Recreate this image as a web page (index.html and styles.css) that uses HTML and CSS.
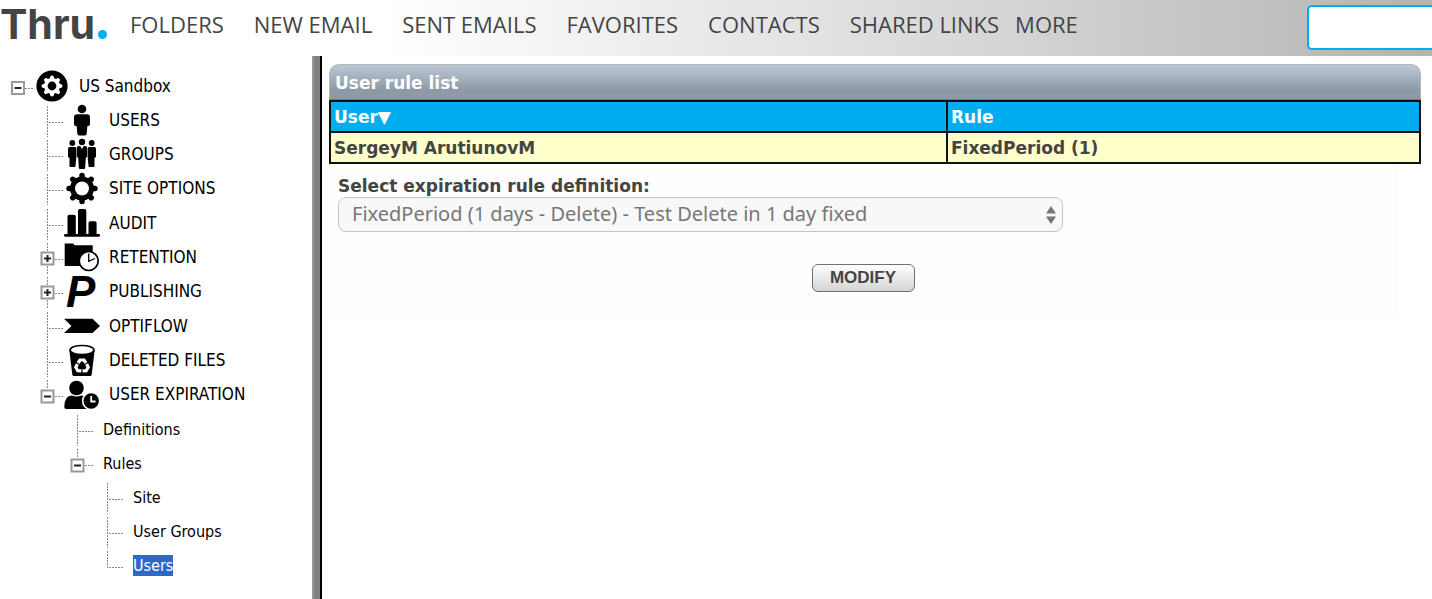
FILE: index.html
```html
<!DOCTYPE html>
<html lang="en">
<head>
    <meta charset="UTF-8">
    <meta name="viewport" content="width=device-width, initial-scale=1.0">
    <title>Thru - User rule list</title>
    <link rel="stylesheet" href="styles.css">
</head>
<body>
    <!-- tree line shapes, reused by every row -->
    <svg class="defs" width="0" height="0" aria-hidden="true">
        <symbol id="line-mid" viewBox="0 0 27 34">
            <path d="M10.500 3V34M12 19.500H27" class="dots"/>
        </symbol>
        <symbol id="line-end" viewBox="0 0 27 34">
            <path d="M10.500 3V20M12 19.500H27" class="dots"/>
        </symbol>
        <symbol id="minus" viewBox="0 0 27 34">
            <path d="M18 19.500H27" class="dots"/>
            <rect x="5" y="13" width="12" height="12" class="box"/>
            <path d="M7.500 19H14.500" class="sign"/>
        </symbol>
        <symbol id="minus-mid" viewBox="0 0 27 34">
            <path d="M10.500 3V12M18 19.500H27" class="dots"/>
            <rect x="4.500" y="13.500" width="12" height="12" class="box"/>
            <path d="M7 19.500H14" class="sign"/>
        </symbol>
        <symbol id="plus" viewBox="0 0 27 34">
            <path d="M10.500 3V12M10.500 26V34M18 19.500H27" class="dots"/>
            <rect x="4.500" y="12.500" width="12" height="12" class="box"/>
            <path d="M7 18.500H14M10.500 15V22" class="sign"/>
        </symbol>
    </svg>

    <header class="header">
        <a class="logo" href="#">Thru<span class="logo-dot"></span></a>
        <nav class="nav">
            <a href="#">FOLDERS</a>
            <a href="#">NEW EMAIL</a>
            <a href="#">SENT EMAILS</a>
            <a href="#">FAVORITES</a>
            <a href="#">CONTACTS</a>
            <a href="#">SHARED LINKS</a>
            <a href="#" class="more">MORE</a>
        </nav>
        <input type="text" class="search" aria-label="Search">
    </header>

    <div class="page">
        <aside class="sidebar">
            <ul class="tree">
                <li>
                    <div class="row">
                        <button class="toggle" aria-label="Collapse"><svg class="line"><use href="#minus"/></svg></button>
                        <svg class="icon" viewBox="0 0 36 34">
                            <circle cx="18" cy="17" r="15.600"/>
                            <g stroke="#fff" stroke-width="4" stroke-linecap="round">
                                <path d="M18 8.500V25.500M9.500 17H26.500M12 11L24 23M24 11L12 23"/>
                            </g>
                            <circle cx="18" cy="17" r="8" fill="#fff"/>
                            <circle cx="18" cy="17" r="4.400"/>
                        </svg>
                        <a class="label" href="#">US Sandbox</a>
                    </div>
                    <ul>
                        <li>
                            <div class="row">
                                <svg class="line"><use href="#line-mid"/></svg>
                                <svg class="icon" viewBox="0 0 36 34">
                                    <circle cx="18" cy="6" r="4.300"/>
                                    <path d="M13 11.300h10q3 0 3 3v7q0 2-2.700 2l-.6 7.500q-.2 1.700-1.700 1.700h-6q-1.500 0-1.700-1.700l-.6-7.500q-2.700 0-2.700-2v-7q0-3 3-3z"/>
                                </svg>
                                <a class="label" href="#">USERS</a>
                            </div>
                        </li>
                        <li>
                            <div class="row">
                                <svg class="line"><use href="#line-mid"/></svg>
                                <svg class="icon" viewBox="0 0 36 34">
                                    <circle cx="8.300" cy="6" r="2.900"/>
                                    <circle cx="27.700" cy="6" r="2.900"/>
                                    <circle cx="18" cy="5" r="3.200"/>
                                    <path d="M5.500 10h5.500q1 0 1.200 1v11l-.7 7q0 1-1 1h-4q-1 0-1-1v-8l-1.500-1v-8q0-2 1.500-2zM30.500 10H25q-1 0-1.200 1v11l.7 7q0 1 1 1h4q1 0 1-1v-8l1.500-1v-8q0-2-1.500-2z"/>
                                    <path d="M15 9h1.300l1.700 3 1.700-3H21q2.300 0 2.300 2.300V20l-1.500.8-.6 10q-.1 1.200-1.200 1.200h-4q-1.100 0-1.200-1.200l-.6-10-1.500-.8v-8.700Q12.700 9 15 9z"/>
                                </svg>
                                <a class="label" href="#">GROUPS</a>
                            </div>
                        </li>
                        <li>
                            <div class="row">
                                <svg class="line"><use href="#line-mid"/></svg>
                                <svg class="icon" viewBox="0 0 36 34">
                                    <g stroke="#000" stroke-width="5.500" stroke-linecap="round">
                                        <path d="M18 4.500V30.500M5 17.500H31M8.800 8.300L27.200 26.700M27.200 8.300L8.800 26.700"/>
                                    </g>
                                    <circle cx="18" cy="17.500" r="12"/>
                                    <circle cx="18" cy="17.500" r="7" fill="#fff"/>
                                </svg>
                                <a class="label" href="#">SITE OPTIONS</a>
                            </div>
                        </li>
                        <li>
                            <div class="row">
                                <svg class="line"><use href="#line-mid"/></svg>
                                <svg class="icon" viewBox="0 0 36 34">
                                    <path d="M3.500 28V10.500q0-1.800 1.800-1.800H10q1.800 0 1.800 1.800V28zM14 28V4.800Q14 3 15.800 3h4.700q1.800 0 1.800 1.800V28zM24.500 28V17q0-1.800 1.800-1.800h4.500q1.800 0 1.800 1.800v11z"/>
                                    <rect x="0" y="28" width="36" height="2.800" rx="1.400"/>
                                </svg>
                                <a class="label" href="#">AUDIT</a>
                            </div>
                        </li>
                        <li>
                            <div class="row">
                                <button class="toggle" aria-label="Expand"><svg class="line"><use href="#plus"/></svg></button>
                                <svg class="icon" viewBox="0 0 36 34">
                                    <path d="M.7 3.500h8.500l1.300 1.800h18.200V26H.7z"/>
                                    <circle cx="24.700" cy="21" r="9.500" fill="#fff" stroke="#000" stroke-width="1.700"/>
                                    <path d="M24.700 13.500V21.300L31 18.500" fill="none" stroke="#000" stroke-width="1.300"/>
                                </svg>
                                <a class="label" href="#">RETENTION</a>
                            </div>
                        </li>
                        <li>
                            <div class="row">
                                <button class="toggle" aria-label="Expand"><svg class="line"><use href="#plus"/></svg></button>
                                <svg class="icon" viewBox="0 0 36 34" aria-hidden="true">
                                    <text x="2" y="33" class="letter">P</text>
                                </svg>
                                <a class="label" href="#">PUBLISHING</a>
                            </div>
                        </li>
                        <li>
                            <div class="row">
                                <svg class="line"><use href="#line-mid"/></svg>
                                <svg class="icon" viewBox="0 0 36 34">
                                    <path d="M0 9.700H28.500L36 17L28.500 24H0L7.500 17z"/>
                                </svg>
                                <a class="label" href="#">OPTIFLOW</a>
                            </div>
                        </li>
                        <li>
                            <div class="row">
                                <svg class="line"><use href="#line-mid"/></svg>
                                <svg class="icon" viewBox="0 0 36 34">
                                    <path d="M5.300 7L8.300 31.500q.2 1.500 1.700 1.500h16q1.500 0 1.700-1.500L30.700 7z"/>
                                    <ellipse cx="18" cy="7" rx="11.900" ry="4.500" fill="#fff" stroke="#000" stroke-width="1.600"/>
                                    <g fill="none" stroke="#fff" stroke-width="3.200">
                                        <path d="M14 20L16 17H20L22 20"/>
                                        <path d="M14 20L16 17H20L22 20" transform="rotate(120 18 23)"/>
                                        <path d="M14 20L16 17H20L22 20" transform="rotate(240 18 23)"/>
                                    </g>
                                </svg>
                                <a class="label" href="#">DELETED FILES</a>
                            </div>
                        </li>
                        <li>
                            <div class="row">
                                <button class="toggle" aria-label="Collapse"><svg class="line"><use href="#minus-mid"/></svg></button>
                                <svg class="icon" viewBox="0 0 36 34">
                                    <circle cx="12.500" cy="11" r="7.300"/>
                                    <path d="M.3 30q0-11.500 7.700-11.500 4.500 2.200 9 0 4 0 5.500 3V32H2.300q-2 0-2-2z"/>
                                    <circle cx="27.200" cy="24" r="8.500" stroke="#fff" stroke-width="1.600"/>
                                    <path d="M27.200 19V24.500H31.500" fill="none" stroke="#fff" stroke-width="1.800"/>
                                </svg>
                                <a class="label" href="#">USER EXPIRATION</a>
                            </div>
                            <ul class="sub">
                                <li>
                                    <div class="row">
                                        <svg class="line"><use href="#line-mid"/></svg>
                                        <a class="label" href="#">Definitions</a>
                                    </div>
                                </li>
                                <li>
                                    <div class="row">
                                        <button class="toggle" aria-label="Collapse"><svg class="line"><use href="#minus-mid"/></svg></button>
                                        <a class="label" href="#">Rules</a>
                                    </div>
                                    <ul>
                                        <li>
                                            <div class="row">
                                                <svg class="line"><use href="#line-mid"/></svg>
                                                <a class="label" href="#">Site</a>
                                            </div>
                                        </li>
                                        <li>
                                            <div class="row">
                                                <svg class="line"><use href="#line-mid"/></svg>
                                                <a class="label" href="#">User Groups</a>
                                            </div>
                                        </li>
                                        <li>
                                            <div class="row">
                                                <svg class="line"><use href="#line-end"/></svg>
                                                <a class="label selected" href="#">Users</a>
                                            </div>
                                        </li>
                                    </ul>
                                </li>
                            </ul>
                        </li>
                    </ul>
                </li>
            </ul>
        </aside>

        <main class="content">
            <h1 class="title">User rule list</h1>
            <table class="rules">
                <thead>
                    <tr>
                        <th class="col-user">User▼</th>
                        <th>Rule</th>
                    </tr>
                </thead>
                <tbody>
                    <tr>
                        <td>SergeyM ArutiunovM</td>
                        <td>FixedPeriod (1)</td>
                    </tr>
                </tbody>
            </table>
            <form class="panel">
                <label for="definition">Select expiration rule definition:</label>
                <div class="select-wrap">
                    <select id="definition" disabled>
                        <option>FixedPeriod (1 days - Delete) - Test Delete in 1 day fixed</option>
                    </select>
                    <svg class="arrows" viewBox="0 0 10 18">
                        <path d="M5 0L10 7.500H0zM5 18L0 10.500H10z"/>
                    </svg>
                </div>
                <button type="button" class="modify">MODIFY</button>
            </form>
        </main>
    </div>
</body>
</html>
```

FILE: styles.css
```css
* {
    box-sizing: border-box;
}

body {
    margin: 0;
    min-height: 100vh;
    display: flex;
    flex-direction: column;
    font-family: "DejaVu Sans", Verdana, sans-serif;
    color: #444;
    background: #fff;
}

a {
    color: inherit;
    text-decoration: none;
}

.defs {
    position: absolute;
}

/* header */
.header {
    display: flex;
    height: 56px;
    background: linear-gradient(to right, #fff 27%, #d5d5d5 70%, #b3b3b3);
}

.logo {
    display: flex;
    align-items: baseline;
    width: 130px;
    font-family: Inter, sans-serif;
    font-size: 41px;
    line-height: 48px;
    font-weight: 700;
}

.logo-dot {
    width: 9px;
    height: 9px;
    margin-left: 3px;
    border-radius: 50%;
    background: #00aeef;
}

.nav {
    display: flex;
    gap: 30px;
    font-family: "Open Sans", sans-serif;
    font-size: 22px;
    line-height: 48px;
    white-space: nowrap;
}

.nav .more {
    margin-left: -14px;
}

.search {
    width: 125px;
    height: 45px;
    margin: 5px 0 0 auto;
    padding: 0 10px;
    border: 2px solid #00aeef;
    border-right: none;
    border-radius: 5px 0 0 5px;
    background: #fff;
    font-size: 20px;
}

.page {
    display: flex;
    flex: 1;
}

/* tree */
.sidebar {
    flex: none;
    width: 322px;
    padding: 13px 0 0 7px;
    border-right: 2px solid #000;
    box-shadow: inset -6px 0 #808080, inset -8px 0 #999;
}

.tree,
.tree ul {
    margin: 0;
    padding: 0;
    list-style: none;
}

.tree ul {
    padding-left: 30px;
}

.tree .sub {
    padding-top: 1px;
}

.tree li:nth-child(3n) {
    margin-bottom: 1px;
}

.row {
    display: flex;
    align-items: center;
    height: 34px;
}

.toggle {
    display: flex;
    padding: 0;
    border: none;
    background: none;
    cursor: pointer;
}

.line {
    display: block;
    width: 27px;
    height: 34px;
}

.dots {
    fill: none;
    stroke: #888;
    stroke-width: 1;
    stroke-dasharray: 2 1;
}

.box {
    fill: #fff;
    stroke: #999;
    stroke-width: 2;
}

.sign {
    stroke: #222;
    stroke-width: 2;
}

.icon {
    width: 36px;
    height: 34px;
    overflow: visible;
}

.letter {
    font-family: "Liberation Sans", Arial, sans-serif;
    font-size: 44px;
    font-weight: bold;
    font-style: italic;
}

.label {
    margin-left: 9px;
    font-family: "DejaVu Sans Condensed", Tahoma, sans-serif;
    font-size: 16px;
    line-height: 21px;
    color: #000;
}

.icon + .label {
    font-size: 17px;
}

.selected {
    background: #2f68c8;
    color: #fff;
}

/* content */
.content {
    flex: 1;
    padding: 8px 11px 0 7px;
    font-size: 17px;
    font-weight: bold;
}

.title {
    height: 36px;
    margin: 0;
    padding-left: 5px;
    border: 1px solid #b5b5b5;
    border-bottom-color: #777;
    border-radius: 10px 10px 0 0;
    background: linear-gradient(#bcc8d5, #8d99a5 75%);
    font-size: 17px;
    line-height: 36px;
    color: #fff;
}

.rules {
    width: 100%;
    border-collapse: collapse;
}

.rules th,
.rules td {
    height: 31px;
    padding: 0 3px;
    border: 2px solid #111;
    text-align: left;
}

.rules th {
    background: #00aeef;
    color: #fff;
}

.rules td {
    background: #ffffcc;
}

.rules .col-user {
    width: 56.6%;
}

.panel {
    display: flex;
    flex-direction: column;
    align-items: flex-start;
    margin-right: 24px;
    padding: 11px 8px 25px;
    border: 1px solid #f9f9f9;
    border-top: none;
    border-radius: 0 0 6px 6px;
    background: #fefefe;
}

.panel label {
    line-height: 22px;
}

.select-wrap {
    position: relative;
    width: 69%;
}

.select-wrap select {
    display: block;
    width: 100%;
    height: 35px;
    padding: 0 30px 2px 13px;
    border: 1px solid #c4c4c4;
    border-radius: 8px;
    background: #f8f8f8;
    appearance: none;
    font-family: "Noto Sans", sans-serif;
    font-size: 20px;
    color: #777;
    opacity: 1;
}

.arrows {
    position: absolute;
    top: 9px;
    right: 7px;
    width: 10px;
    height: 18px;
    fill: #777;
}

.modify {
    align-self: center;
    width: 103px;
    height: 28px;
    margin-top: 32px;
    padding: 0;
    border: 1px solid #707070;
    border-radius: 6px;
    background: linear-gradient(#fff, #d4d4d4);
    font-family: "Liberation Sans", Arial, sans-serif;
    font-size: 17px;
    font-weight: bold;
    color: #444;
    cursor: pointer;
}
```
